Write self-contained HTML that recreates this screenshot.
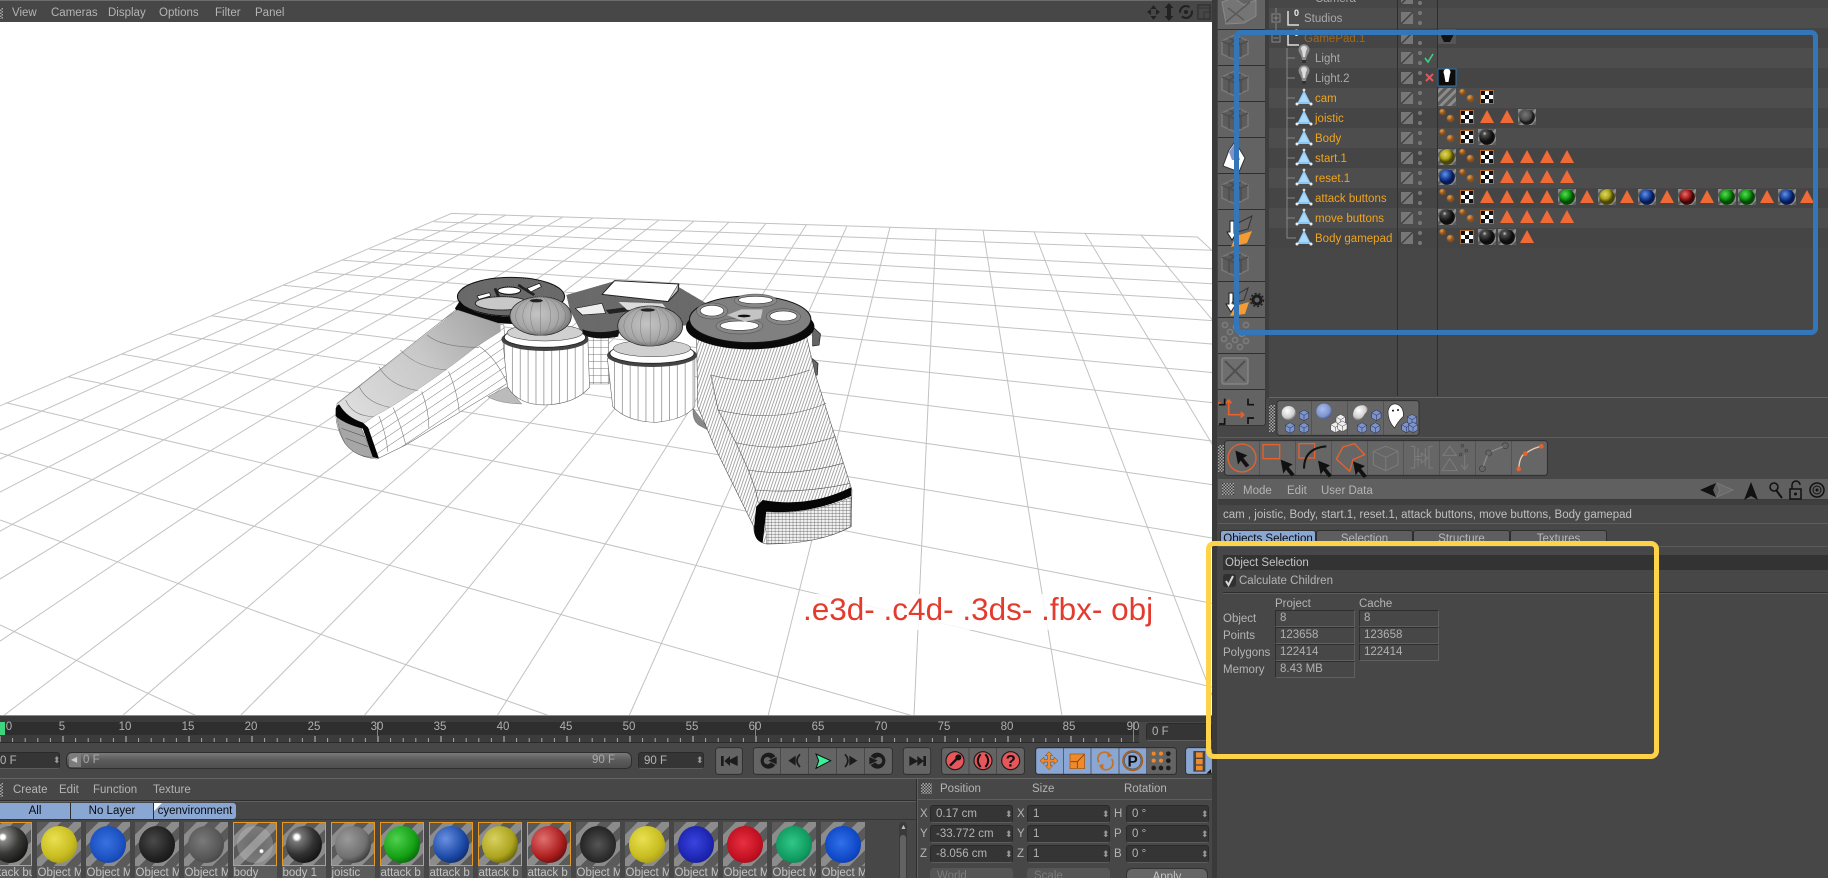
<!DOCTYPE html>
<html><head><meta charset="utf-8"><style>
html,body{margin:0;padding:0;width:1828px;height:878px;overflow:hidden;background:#474747}
body{font:11.5px/14px "Liberation Sans",sans-serif;color:#b4b4b4}
#root{position:absolute;left:0;top:0;width:1828px;height:878px;overflow:hidden;contain:paint}
.a,.t,.n{position:absolute}
.t,.n{white-space:nowrap}
.n{transform:translateX(-50%);height:14px;top:720px;color:#b0b0b0}
.o{color:#f0a41e}
.f{position:absolute;background:#353535;border:1px solid #2a2a2a;border-bottom-color:#5c5c5c;border-radius:3px;box-sizing:border-box;height:18px;padding-left:5px;line-height:16px;color:#b4b4b4}
.c{position:absolute;height:17px;width:80px;box-sizing:border-box;border:1px solid #2e2e2e;border-right-color:#606060;border-bottom-color:#606060;background:#474747;padding-left:4px;line-height:15px;color:#b0b0b0}
.tab{position:absolute;top:530px;height:16px;box-sizing:border-box;width:97px;text-align:center;line-height:16px;background:#5e5e5e;border:1px solid #2e2e2e;border-bottom:0;border-radius:3px 3px 0 0;color:#b8b8b8}
.l{position:absolute;top:803px;height:16px;box-sizing:border-box;line-height:16px;text-align:center;background:#8aa6d2;color:#0c0c0c;border-right:1px solid #2e2e2e}
.m{position:absolute;top:822px;width:44px;height:56px;overflow:hidden;background:#5c5c5c}
.m i{position:absolute;left:0;top:0;width:44px;height:44px;box-sizing:border-box;background:repeating-linear-gradient(135deg,#5a5a5a 0 9px,#8c8c8c 9px 17px)}
.m.s i{border:1px solid #e89a20}
.m b{position:absolute;left:4px;top:4px;width:36px;height:37px;border-radius:50%}
.m u{position:absolute;left:1px;top:46px;height:10px;line-height:10px;text-decoration:none;color:#c4c4c4;white-space:nowrap}
.g{position:absolute;background:repeating-conic-gradient(#a8a8a8 0 25%,#3c3c3c 0 50%) 0 0/3px 3px}
.bt{position:absolute;top:868px;height:10px;overflow:hidden;box-sizing:border-box;padding-top:6px;line-height:4px}
</style></head><body><div id="root">

<!-- viewport menu -->
<div class="a" style="left:0;top:0;width:1212px;height:22px;background:#474747;border-top:1px solid #6c6c6c;box-sizing:border-box"></div>
<div class="g" style="left:0;top:8px;width:3px;height:11px"></div>
<span class="t" style="left:12px;top:6px">View</span><span class="t" style="left:51px;top:6px">Cameras</span><span class="t" style="left:108px;top:6px">Display</span><span class="t" style="left:159px;top:6px">Options</span><span class="t" style="left:215px;top:6px">Filter</span><span class="t" style="left:255px;top:6px">Panel</span>
<svg class="a" style="left:1145px;top:2px" width="68" height="20" viewBox="0 0 68 20" fill="#222" stroke="#222">
<path d="M2,10 L6,7 V13Z M15,10 L11,7 V13Z M8.5,3 L5.5,7 H11.5Z M8.5,18 L5.5,14 H11.5Z" stroke="none"/>
<path d="M24,1 L28.5,6 H26V14 H28.5 L24,19 L19.5,14 H22V6 H19.5Z" stroke="none"/>
<circle cx="41" cy="10" r="6" fill="none" stroke-width="2" stroke-dasharray="14 4"/><circle cx="41" cy="10" r="1.5"/>
<rect x="53" y="3" width="12" height="14" fill="none" stroke="#333" stroke-width="1.5"/><path d="M53,6H65M59,17V10H65" fill="none" stroke="#333"/>
</svg>

<!-- viewport -->
<svg class="a" style="left:0;top:22px" width="1212" height="694" viewBox="0 22 1212 694">
<defs>
<linearGradient id="lg" gradientUnits="userSpaceOnUse" x1="60" y1="450" x2="480" y2="170"><stop offset="0" stop-color="#dedede"/><stop offset=".55" stop-color="#c8c8c8"/><stop offset="1" stop-color="#a4a4a4"/></linearGradient>
<radialGradient id="jg" cx=".45" cy=".45" r=".6"><stop offset="0" stop-color="#c4c4c4"/><stop offset=".7" stop-color="#a4a4a4"/><stop offset="1" stop-color="#707070"/></radialGradient>
<pattern id="h2" patternUnits="userSpaceOnUse" width="8" height="8" patternTransform="rotate(18)"><rect width="8" height="8" fill="#fff"/><path d="M4,0V8" stroke="#444" stroke-width="1.3"/></pattern>
<pattern id="h3" patternUnits="userSpaceOnUse" width="6" height="6"><rect width="6" height="6" fill="#383838"/><path d="M0,0L6,6M6,0L0,6" stroke="#bbb" stroke-width="1.1"/></pattern>
<pattern id="h4" patternUnits="userSpaceOnUse" width="10" height="9"><rect width="10" height="9" fill="#f2f2f2"/><path d="M0,4H10M5,0V9" stroke="#444" stroke-width="1"/></pattern>
<pattern id="v" patternUnits="userSpaceOnUse" width="22" height="30"><rect width="22" height="30" fill="#fff"/><path d="M11,0V30" stroke="#666" stroke-width="1.6"/></pattern>
<pattern id="s1" patternUnits="userSpaceOnUse" width="24" height="24" patternTransform="rotate(-36)"><rect width="24" height="24" fill="#fff"/><path d="M0,12H24" stroke="#777" stroke-width="1.4"/></pattern>
<pattern id="gg" patternUnits="userSpaceOnUse" width="21" height="21"><rect width="21" height="21" fill="#fff"/><path d="M0,10H21M10,0V21" stroke="#666" stroke-width="1.3"/></pattern>
</defs>
<rect x="0" y="22" width="1212" height="694" fill="#fff"/>
<g stroke="#c2c2c2" stroke-width="1" fill="none">
<path d="M451.4,213.4L-5,408M451.4,213.4L1197.5,237M433.9,221.8L1212,250.3M414.4,229.5L1212,268.7M393,238.5L1212,283.7M369.6,249.3L1212,300.5M343.2,260.3L1212,320.6M314.4,272L1212,344M284,285.4L1212,372.5M249,299.8L1212,402.6M212,315.9L1212,441M169.3,334L1212,484.6M121.4,354L1212,538M68,376.8L1212,603.4M5.8,402.6L1212,687M0,453L1212,802M0,520L1212,952M0,625L1212,1185"/>
<path d="M478,214.2L-634,716M506,215.1L-533,716M534,216L-433,716M563,216.9L-331,716M593,217.9L-225,716M626,218.9L-111,716M659,220L3,716M694,221L122,716M729,222L240,716M766,223.3L364,716M806.5,224.5L497,716M847,225.8L629,716M890,227.1L768,716M936,228.6L914,716M983,230L1062,716M1034,231.7L1220,716M1085,233.3L1376,716M1141,235L1545,716M1197.5,237L1712,716"/>
</g>
<rect x="800" y="594" width="360" height="36" fill="#fff" opacity=".85"/>

<!-- gamepad -->
<g transform="translate(320,260) scale(.357,.3333)" stroke-linejoin="round">
<path d="M470,410L525,380L565,432Q500,430 470,410Z" fill="#bbb" stroke="#555"/>
<!-- center body -->
<path d="M690,105L830,62L1000,78L1090,135L1040,195L830,212L740,235L700,150Z" fill="url(#h3)"/>
<path d="M825,62L1005,72L975,125L790,103Z" fill="#fff" stroke="#222" stroke-width="3"/>
<path d="M1005,72L1003,92L975,125" fill="#ccc" stroke="#222" stroke-width="3"/>
<path d="M715,145L790,130L800,160L735,165Z" fill="#eee" stroke="#222" stroke-width="2"/>
<path d="M800,150L870,140L890,150L810,162Z" fill="#222"/>
<path d="M835,125L960,130L980,160L860,150Z" fill="#dcdcdc" stroke="#444"/>
<!-- center post -->
<path d="M738,225L808,225L810,372L752,372Z" fill="url(#gg)" stroke="#444"/>
<path d="M735,208Q780,225 840,208L835,230Q780,242 738,226Z" fill="#111"/>
<!-- dpad disk -->
<ellipse cx="535" cy="110" rx="150" ry="58" fill="url(#h3)" stroke="#111" stroke-width="3"/>
<path d="M378,145Q400,185 540,192L560,170Q420,172 392,122Z" fill="#0a0a0a"/>
<ellipse cx="510" cy="130" rx="75" ry="20" fill="#c8c8c8" stroke="#222" stroke-width="2.5"/>
<path d="M440,108L475,98L478,108L445,118Z M580,85L615,70L620,80L590,96Z" fill="#fff" stroke="#111" stroke-width="2"/>
<ellipse cx="530" cy="92" rx="32" ry="11" fill="#fff" stroke="#111" stroke-width="3"/>
<path d="M490,85L500,110M555,75L600,105" stroke="#222" stroke-width="8" fill="none"/>
<!-- left grip -->
<path d="M48,430L380,150L515,195L525,370L240,555L160,597Q100,592 70,550Q42,500 45,455Z" fill="url(#s1)" stroke="#666" stroke-width="1.5"/>
<path d="M385,150L505,192L505,215L440,258Q340,345 200,440L150,470L120,492Q70,470 50,430Z" fill="url(#lg)" stroke="#888"/>
<g fill="none" stroke="#777" stroke-width="1.6"><path d="M300,225Q340,262 445,262M225,270Q270,322 355,330M165,320Q195,378 275,392M110,380Q130,428 195,442M72,420Q90,468 150,470"/><path d="M205,443Q225,490 240,553M285,395Q305,450 305,505M360,335Q385,395 390,455M445,258Q490,290 525,370M165,468Q185,520 190,575"/></g>
<path d="M48,470Q70,490 115,503L150,592Q100,592 70,550Q50,510 48,470Z" fill="#a6a6a6" stroke="#333"/>
<path d="M60,505L125,530M72,535L135,560" stroke="#444" stroke-width="1.5"/>
<path d="M44,445Q50,430 55,435Q75,472 120,488L135,503L165,595L148,592L120,506Q65,490 44,468Z" fill="#050505"/>
<!-- left cylinder -->
<path d="M512,240L525,380Q555,435 630,435Q715,432 755,382L750,230Z" fill="url(#v)" stroke="#555" stroke-width="1.5"/>
<ellipse cx="630" cy="238" rx="122" ry="35" fill="#444"/>
<ellipse cx="630" cy="232" rx="114" ry="30" fill="#fff" stroke="#222" stroke-width="2.5"/>
<ellipse cx="630" cy="218" rx="106" ry="25" fill="#d0d0d0" stroke="#333" stroke-width="1.5"/>
<ellipse cx="618" cy="168" rx="86" ry="58" fill="url(#jg)" stroke="#222" stroke-width="2"/>
<g fill="none" stroke="#666" stroke-width="1"><ellipse cx="618" cy="168" rx="70" ry="58"/><ellipse cx="618" cy="168" rx="50" ry="58"/><ellipse cx="618" cy="168" rx="28" ry="58"/><path d="M618,110V226"/></g>
<ellipse cx="606" cy="122" rx="18" ry="5" fill="#222"/>
<!-- right cylinder -->
<path d="M805,295L820,440Q860,485 940,487Q1020,480 1050,440L1050,285Z" fill="url(#v)" stroke="#555" stroke-width="1.5"/>
<ellipse cx="930" cy="286" rx="126" ry="35" fill="#444"/>
<ellipse cx="930" cy="280" rx="118" ry="30" fill="#fff" stroke="#222" stroke-width="2.5"/>
<ellipse cx="930" cy="265" rx="108" ry="25" fill="#d0d0d0" stroke="#333" stroke-width="1.5"/>
<ellipse cx="925" cy="198" rx="91" ry="60" fill="url(#jg)" stroke="#222" stroke-width="2"/>
<g fill="none" stroke="#666" stroke-width="1"><ellipse cx="925" cy="198" rx="74" ry="60"/><ellipse cx="925" cy="198" rx="52" ry="60"/><ellipse cx="925" cy="198" rx="28" ry="60"/><path d="M925,138V258"/></g>
<ellipse cx="918" cy="150" rx="20" ry="5" fill="#222"/>
<!-- right small -->
<path d="M1045,445L1095,515L1060,495Q1042,480 1045,445Z" fill="#888" stroke="#444"/>
<path d="M1380,200L1402,222L1398,255L1380,258Z M1378,295L1395,310L1393,345L1378,350Z" fill="#666" stroke="#222" stroke-width="2"/>
<!-- right grip -->
<path d="M1055,235Q1200,280 1362,225L1388,345L1490,690L1488,800Q1400,852 1250,852Q1215,845 1215,800L1105,560L1058,440Z" fill="url(#h2)" stroke="#444" stroke-width="1.5"/>
<g fill="none" stroke="#555" stroke-width="1.6"><path d="M1095,345Q1230,385 1372,330M1115,450Q1280,492 1418,430M1165,548Q1300,582 1445,530M1200,630Q1320,652 1465,610M1220,690Q1350,702 1485,670"/><path d="M1095,345L1115,450L1165,548L1200,630L1220,690L1228,730"/></g>
<path d="M1245,755Q1370,768 1488,712L1486,800Q1400,852 1252,852Z" fill="url(#h4)" stroke="#444"/>
<path d="M1222,740L1240,720Q1370,745 1488,682L1488,708Q1370,765 1250,755L1240,848Q1215,842 1216,800Z" fill="#060606"/>
<!-- right disk -->
<ellipse cx="1205" cy="200" rx="180" ry="68" fill="#0a0a0a"/>
<ellipse cx="1205" cy="178" rx="170" ry="70" fill="#808080" stroke="#111" stroke-width="3"/>
<ellipse cx="1220" cy="122" rx="60" ry="20" fill="#888" stroke="#333"/><ellipse cx="1220" cy="120" rx="48" ry="11" fill="#fff" stroke="#222" stroke-width="1.5"/>
<ellipse cx="1098" cy="153" rx="44" ry="24" fill="#888" stroke="#333"/><ellipse cx="1098" cy="152" rx="33" ry="16" fill="#fff" stroke="#222" stroke-width="1.5"/>
<ellipse cx="1298" cy="170" rx="48" ry="24" fill="#888" stroke="#333"/><ellipse cx="1298" cy="168" rx="38" ry="15" fill="#fff" stroke="#222" stroke-width="1.5"/>
<ellipse cx="1175" cy="198" rx="66" ry="24" fill="#888" stroke="#333"/><ellipse cx="1175" cy="197" rx="54" ry="14" fill="#fff" stroke="#222" stroke-width="1.5"/>
<path d="M1140,165L1180,148H1240L1235,175L1190,185Z" fill="#c4c4c4"/><ellipse cx="1188" cy="168" rx="18" ry="4" fill="#111"/>
</g>
</svg>
<span class="t" style="left:803px;top:591px;font-size:31.5px;line-height:36px;color:#e33b2e">.e3d- .c4d- .3ds- .fbx- obj</span>

<!-- timeline -->
<div class="a" style="left:0;top:715px;width:1212px;height:1px;background:#8a8a8a"></div>
<div class="a" style="left:0;top:716px;width:1212px;height:6px;background:#3a3a3a"></div>
<div class="a" style="left:0;top:722px;width:1139px;height:13px;background:#2e2e2e"></div>
<div class="a" style="left:0;top:735px;width:1139px;height:8px;background:#3c3c3c;border-bottom:1px solid #2a2a2a;box-sizing:border-box"></div>
<svg class="a" style="left:0;top:722px" width="1140" height="22">
<defs><pattern id="tk" patternUnits="userSpaceOnUse" x="-.5" width="12.6" height="22"><rect width="1" height="22" fill="#a8a8a8"/></pattern>
<pattern id="tk5" patternUnits="userSpaceOnUse" x="-.5" width="63" height="22"><rect width="1" height="22" fill="#c0c0c0"/></pattern></defs>
<rect x="0" y="16" width="1133" height="4" fill="url(#tk)"/><rect x="0" y="14" width="1133" height="6" fill="url(#tk5)"/>
<rect x="377" y="0" width="1" height="20" fill="#858585"/><rect x="755" y="0" width="1" height="20" fill="#858585"/><rect x="1133" y="0" width="1" height="20" fill="#858585"/>
</svg>
<div class="a" style="left:0;top:722px;width:5px;height:13px;background:#3fd47e"></div>
<span class="n" style="left:9px">0</span><span class="n" style="left:62px">5</span><span class="n" style="left:125px">10</span><span class="n" style="left:188px">15</span><span class="n" style="left:251px">20</span><span class="n" style="left:314px">25</span><span class="n" style="left:377px">30</span><span class="n" style="left:440px">35</span><span class="n" style="left:503px">40</span><span class="n" style="left:566px">45</span><span class="n" style="left:629px">50</span><span class="n" style="left:692px">55</span><span class="n" style="left:755px">60</span><span class="n" style="left:818px">65</span><span class="n" style="left:881px">70</span><span class="n" style="left:944px">75</span><span class="n" style="left:1007px">80</span><span class="n" style="left:1069px">85</span><span class="n" style="left:1133px">90</span>
<div class="f" style="left:1146px;top:723px;width:66px">0 F</div>
<div class="f" style="left:-6px;top:752px;width:66px;height:17px">0 F</div><span class="t" style="left:53px;top:753px;font-size:9px;color:#999">⬍</span>
<div class="a" style="left:66px;top:752px;width:566px;height:17px;border-radius:6px;background:linear-gradient(#7a7a7a,#5c5c5c 45%,#4e4e4e);border:1px solid #2e2e2e;box-sizing:border-box"></div>
<div class="a" style="left:69px;top:754px;width:12px;height:13px;background:#7c7c7c"></div><span class="t" style="left:71px;top:753px;font-size:8px;color:#ccc">◀</span>
<span class="t" style="left:83px;top:753px;color:#aaa">0 F</span><span class="t" style="left:592px;top:753px;color:#aaa">90 F</span>
<div class="f" style="left:638px;top:752px;width:66px;height:17px;padding-left:5px">90 F</div><span class="t" style="left:696px;top:753px;font-size:9px;color:#999">⬍</span>

<!-- transport -->
<svg class="a" style="left:710px;top:745px" width="505" height="34" viewBox="0 0 1515 102">
<g stroke="#2c2c2c" stroke-width="2.5" fill="#646464">
<rect x="17" y="8" width="80" height="80" rx="8"/><rect x="130" y="8" width="417" height="80" rx="8"/><rect x="580" y="8" width="82" height="80" rx="8"/><rect x="695" y="8" width="248" height="80" rx="8"/>
<rect x="977" y="8" width="422" height="80" rx="8" fill="#8aa6d2"/><path d="M1310,9H1391Q1399,9 1399,17V79Q1399,87 1391,87H1310Z" stroke="none"/><rect x="977" y="8" width="422" height="80" rx="8" fill="none"/>
<rect x="1427" y="8" width="80" height="80" rx="8" fill="#8aa6d2"/>
</g>
<path d="M212,9V87M296,9V87M380,9V87M464,9V87M777,9V87M860,9V87M1060,9V87M1143,9V87M1227,9V87M1310,9V87" stroke="#3a3a3a" stroke-width="2"/>
<g fill="#1c1c1c">
<path d="M33,33H41V63H33Z M43,48L60,33V44L83,32V63L60,52V63Z"/>
<path d="M196,34A24,24 0 1 0 196,60L182,52A11,11 0 1 1 182,42Z"/><path d="M175,47L200,36V58Z"/>
<path d="M235,47L257,32V62Z"/><path d="M270,28Q252,47 270,66" fill="none" stroke="#1c1c1c" stroke-width="5"/>
<path d="M405,28Q422,47 405,66" fill="none" stroke="#1c1c1c" stroke-width="5"/><path d="M418,32L442,47L418,62Z"/>
<path d="M482,34A24,24 0 1 1 482,60L496,52A11,11 0 1 0 496,42Z"/><path d="M503,47L478,36V58Z"/>
<path d="M598,33L622,47L622,33L640,47V33H648V63H640V49L622,63V50L598,63Z"/>
</g>
<path d="M318,27L362,47L318,70L326,47Z" fill="#3cf09a" stroke="#111" stroke-width="3"/>
<g fill="#e8555a" stroke="#1c1c1c" stroke-width="3.5"><circle cx="735" cy="47" r="27"/><circle cx="819" cy="47" r="27"/><circle cx="902" cy="47" r="27"/></g>
<path d="M720,62L742,40" stroke="#111" stroke-width="7"/><circle cx="745" cy="37" r="9" fill="#111"/>
<path d="M812,28Q795,47 812,66M826,28Q843,47 826,66" fill="none" stroke="#111" stroke-width="6"/>
<text x="902" y="64" font-family="Liberation Sans" font-weight="700" font-size="50" text-anchor="middle" fill="#111">?</text>
<g fill="#ef8a2a" stroke="#7a3e10" stroke-width="1.5">
<path d="M1017,20L1028,32H1021V43H1032V36L1044,47L1032,58V51H1021V62H1028L1017,74L1006,62H1013V51H1002V58L990,47L1002,36V43H1013V32H1006Z"/>
<rect x="1080" y="27" width="44" height="44"/>
</g><path d="M1082,50H1102V69M1102,50L1122,29" fill="none" stroke="#7a3e10" stroke-width="2.5"/>
<g fill="none" stroke="#c8701e" stroke-width="5"><path d="M1167,52A19,19 0 0 1 1200,30M1205,42A19,19 0 0 1 1172,66"/></g><path d="M1193,22L1207,32L1192,38Z M1180,72L1166,62L1180,56Z" fill="#c8701e"/>
<circle cx="1268" cy="47" r="29" fill="none" stroke="#a85e18" stroke-width="5"/><circle cx="1268" cy="47" r="25" fill="none" stroke="#222" stroke-width="1.5"/>
<text x="1268" y="64" font-family="Liberation Sans" font-weight="700" font-size="46" text-anchor="middle" fill="#111">P</text>
<g fill="#ef8a2a"><circle cx="1331" cy="26" r="6"/><circle cx="1353" cy="26" r="6"/><circle cx="1331" cy="47" r="6"/><circle cx="1353" cy="47" r="6"/></g>
<g fill="#1e1e1e"><circle cx="1375" cy="26" r="7"/><circle cx="1375" cy="47" r="7"/><circle cx="1331" cy="69" r="7"/><circle cx="1353" cy="69" r="7"/><circle cx="1375" cy="69" r="7"/></g>
<rect x="1450" y="18" width="36" height="62" fill="#444"/><path d="M1458,22H1478V38H1458ZM1458,42H1478V58H1458ZM1458,62H1478V76H1458Z" fill="#ef8a2a"/><path d="M1489,86L1503,86L1503,72Z" fill="#111"/>
</svg>

<!-- material manager -->
<div class="a" style="left:0;top:778px;width:1212px;height:1px;background:#656565"></div>
<div class="a" style="left:0;top:800px;width:916px;height:1px;background:#2e2e2e"></div>
<div class="a" style="left:0;top:801px;width:916px;height:1px;background:#606060"></div>
<div class="g" style="left:0;top:783px;width:3px;height:14px"></div>
<span class="t" style="left:13px;top:783px">Create</span><span class="t" style="left:59px;top:783px">Edit</span><span class="t" style="left:93px;top:783px">Function</span><span class="t" style="left:153px;top:783px">Texture</span>
<div class="l" style="left:0;width:71px">All</div><div class="l" style="left:71px;width:83px">No Layer</div><div class="l" style="left:154px;width:82px;border-radius:0 3px 3px 0;border-right:0">cyenvironment</div>
<div class="a" style="left:154px;top:803px;width:0;height:0;border-top:8px solid #fff;border-right:8px solid transparent"></div>
<div class="a" style="left:0;top:819px;width:916px;height:1px;background:#353535"></div>

<div class="m s" style="left:-12.5px"><i></i><b style="background:radial-gradient(circle at 30% 30%,#fff 0 6%,#888 12%,#3a3a38 45%,#0c0c0c 85%)"></b><u>attack bu</u></div>
<div class="m" style="left:36.5px"><i></i><b style="background:radial-gradient(circle at 38% 35%,#e8e050,#c8bd20 55%,#8f8410)"></b><u>Object M</u></div>
<div class="m" style="left:85.5px"><i></i><b style="background:radial-gradient(circle at 45% 45%,#3a72e0,#1a4fc0 60%,#0e2f80)"></b><u>Object M</u></div>
<div class="m" style="left:134.5px"><i></i><b style="background:radial-gradient(circle at 40% 40%,#4a4a4a,#222 55%,#0c0c0c)"></b><u>Object M</u></div>
<div class="m" style="left:183.5px"><i></i><b style="background:radial-gradient(circle at 40% 40%,#7a7a7a,#555 60%,#333)"></b><u>Object M</u></div>
<div class="m s" style="left:232.5px"><i></i><b style="background:radial-gradient(circle at 68% 68%,#fff 0 4%,rgba(255,255,255,0) 7%),radial-gradient(circle at 50% 50%,rgba(255,255,255,.1),rgba(220,220,220,.25) 72%,rgba(235,235,235,.85) 86%,rgba(255,255,255,.2) 97%)"></b><u>body</u></div>
<div class="m s" style="left:281.5px"><i></i><b style="background:radial-gradient(circle at 30% 30%,#fff 0 6%,#777 14%,#333 48%,#0c0c0c 85%)"></b><u>body 1</u></div>
<div class="m s" style="left:330.5px"><i></i><b style="background:radial-gradient(circle at 35% 35%,#9a9a9a,#707070 55%,#1e1e1e 90%)"></b><u>joistic</u></div>
<div class="m s" style="left:379.5px"><i></i><b style="background:radial-gradient(circle at 35% 35%,#50d050,#14a014 55%,#044804 92%)"></b><u>attack b</u></div>
<div class="m s" style="left:428.5px"><i></i><b style="background:radial-gradient(circle at 35% 35%,#6a90e0,#1c4aa8 55%,#081c50 92%)"></b><u>attack b</u></div>
<div class="m s" style="left:477.5px"><i></i><b style="background:radial-gradient(circle at 35% 35%,#d8d060,#aca41c 55%,#3e3a08 92%)"></b><u>attack b</u></div>
<div class="m s" style="left:526.5px"><i></i><b style="background:radial-gradient(circle at 35% 35%,#e07070,#ae1e1e 55%,#3c0808 92%)"></b><u>attack b</u></div>
<div class="m" style="left:575.5px"><i></i><b style="background:radial-gradient(circle at 50% 50%,#555,#2e2e2e 55%,#141414)"></b><u>Object M</u></div>
<div class="m" style="left:624.5px"><i></i><b style="background:radial-gradient(circle at 38% 35%,#e8e050,#c8bd20 55%,#8f8410)"></b><u>Object M</u></div>
<div class="m" style="left:673.5px"><i></i><b style="background:radial-gradient(circle at 45% 45%,#3a44e0,#1c25b0 60%,#0e1470)"></b><u>Object M</u></div>
<div class="m" style="left:722.5px"><i></i><b style="background:radial-gradient(circle at 45% 45%,#e83040,#c01020 60%,#800810)"></b><u>Object M</u></div>
<div class="m" style="left:771.5px"><i></i><b style="background:radial-gradient(circle at 45% 45%,#30c888,#109a60 60%,#066040)"></b><u>Object M</u></div>
<div class="m" style="left:820.5px"><i></i><b style="background:radial-gradient(circle at 45% 45%,#3070e8,#1048c8 60%,#082c88)"></b><u>Object M</u></div>
<div class="a" style="left:899px;top:822px;width:8px;height:56px;background:#3a3a3a;border-radius:4px 4px 0 0"></div>
<div class="a" style="left:900px;top:835px;width:6px;height:43px;background:#626262;border-radius:3px 3px 0 0"></div>
<span class="t" style="left:900px;top:821px;font-size:7px;color:#bbb">▲</span>

<!-- coordinates -->
<div class="a" style="left:916px;top:779px;width:1px;height:99px;background:#2e2e2e"></div><div class="a" style="left:917px;top:779px;width:1px;height:99px;background:#5e5e5e"></div>
<div class="g" style="left:921px;top:783px;width:11px;height:11px"></div>
<span class="t" style="left:940px;top:782px">Position</span><span class="t" style="left:1032px;top:782px">Size</span><span class="t" style="left:1124px;top:782px">Rotation</span>
<div class="a" style="left:918px;top:799px;width:294px;height:1px;background:#5e5e5e"></div>
<span class="t" style="left:920px;top:807px">X</span><span class="t" style="left:920px;top:827px">Y</span><span class="t" style="left:920px;top:847px">Z</span>
<span class="t" style="left:1017px;top:807px">X</span><span class="t" style="left:1017px;top:827px">Y</span><span class="t" style="left:1017px;top:847px">Z</span>
<span class="t" style="left:1114px;top:807px">H</span><span class="t" style="left:1114px;top:827px">P</span><span class="t" style="left:1114px;top:847px">B</span>
<div class="f" style="left:930px;top:805px;width:83px">0.17 cm</div><div class="f" style="left:930px;top:825px;width:83px">-33.772 cm</div><div class="f" style="left:930px;top:845px;width:83px">-8.056 cm</div>
<div class="f" style="left:1027px;top:805px;width:83px">1</div><div class="f" style="left:1027px;top:825px;width:83px">1</div><div class="f" style="left:1027px;top:845px;width:83px">1</div>
<div class="f" style="left:1126px;top:805px;width:83px">0 °</div><div class="f" style="left:1126px;top:825px;width:83px">0 °</div><div class="f" style="left:1126px;top:845px;width:83px">0 °</div>
<span class="t" style="left:1005px;top:807px;font-size:9px;color:#999">⬍</span><span class="t" style="left:1005px;top:827px;font-size:9px;color:#999">⬍</span><span class="t" style="left:1005px;top:847px;font-size:9px;color:#999">⬍</span>
<span class="t" style="left:1102px;top:807px;font-size:9px;color:#999">⬍</span><span class="t" style="left:1102px;top:827px;font-size:9px;color:#999">⬍</span><span class="t" style="left:1102px;top:847px;font-size:9px;color:#999">⬍</span>
<span class="t" style="left:1201px;top:807px;font-size:9px;color:#999">⬍</span><span class="t" style="left:1201px;top:827px;font-size:9px;color:#999">⬍</span><span class="t" style="left:1201px;top:847px;font-size:9px;color:#999">⬍</span>
<div class="bt" style="left:930px;width:83px;border-radius:4px 4px 0 0;background:#565656;color:#7c7c7c;padding-left:7px">World</div>
<div class="bt" style="left:1027px;width:83px;border-radius:4px 4px 0 0;background:#565656;color:#7c7c7c;padding-left:7px">Scale</div>
<div class="bt" style="left:1126px;width:82px;border-radius:6px 6px 0 0;background:#666;border:1px solid #333;border-bottom:0;text-align:center;color:#c4c4c4">Apply</div>

<!-- right side -->
<div class="a" style="left:1212px;top:0;width:5px;height:878px;background:#3a3a3a"></div>
<div class="a" style="left:1265px;top:0;width:4px;height:398px;background:#3e3e3e"></div>
<!-- palette -->
<div class="a" style="left:1218px;top:0;width:47px;height:425px;background:repeating-linear-gradient(#2f2f2f 0 1px,#636363 1px 36px) 0 -7px;border-radius:0 0 4px 4px"></div>
<svg class="a" style="left:1218px;top:0" width="48" height="426" fill="none">
<defs><g id="cube" stroke="#797979" stroke-width="1.5" fill="#5c5c5c"><path d="M0,-12L13,-6V7L0,13L-13,7V-6Z"/><path d="M-13,-6L0,0L13,-6M0,0V13M-6,-9L6,-3V10M6,-9L-6,-3V10" fill="none" stroke="#4c4c4c"/></g></defs>
<path d="M4,2L16,-2L26,5L38,0V16L26,23L8,24Z" stroke="#8a8a8a" fill="#757575"/><path d="M8,22L32,2M10,8L26,20" stroke="#5a5a5a" stroke-width="1.5"/>
<use href="#cube" x="17" y="47"/><use href="#cube" x="17" y="83"/><use href="#cube" x="17" y="119"/>
<use href="#cube" x="17" y="191"/><use href="#cube" x="17" y="263"/>
<path d="M11,150L16,143L19,145L27,158L21,172L5,166Z" fill="#fff" stroke="#333"/><path d="M11,152L17,143L22,160L14,160Z" fill="#7d93cc"/>
<path d="M12,221V232H9L14,240L19,232H16V221Z" fill="#fff" stroke="#222"/>
<path d="M20,223L34,216L30,229L16,233Z" fill="#666" stroke="#333"/><path d="M18,236L34,231L29,243L13,247Z" fill="#f39c34"/>
<path d="M11,293V304H8L13,312L18,304H15V293Z" fill="#fff" stroke="#222"/>
<path d="M18,295L30,288L26,300L14,303Z" fill="#666" stroke="#333"/><path d="M17,306L31,302L27,314L12,316Z" fill="#f39c34"/>
<circle cx="39" cy="300" r="4" stroke="#1c1c1c" stroke-width="3"/><circle cx="39" cy="300" r="6.5" stroke="#1c1c1c" stroke-width="1.5" stroke-dasharray="2 2"/>
<g stroke="#7c7c7c" stroke-width="1.6"><circle cx="7" cy="325" r="2.6"/><circle cx="18" cy="327" r="2.6"/><circle cx="28" cy="325" r="2.6"/><circle cx="12" cy="332" r="2.6"/><circle cx="24" cy="334" r="2.6"/><circle cx="6" cy="339" r="2.6"/><circle cx="17" cy="340" r="2.6"/><circle cx="28" cy="341" r="2.6"/><circle cx="11" cy="346" r="2.6"/><circle cx="22" cy="347" r="2.6"/></g>
<rect x="4" y="358" width="26" height="26" rx="2" fill="#6e6e6e" stroke="#838383" stroke-width="1.5"/><path d="M7,361L27,381M27,361L7,381" stroke="#505050" stroke-width="2"/>
</svg>
<svg class="a" style="left:1218px;top:398px" width="335" height="82" viewBox="0 0 1005 246">
<defs>
<g id="cb" fill="#7d93cc" stroke="#1f2a44" stroke-width="1.5"><path d="M0,-16L14,-8V8L0,16L-14,8V-8Z"/><path d="M-14,-8L0,0L14,-8M0,0V16" fill="none"/></g>
<g id="cw" fill="#eee" stroke="#444" stroke-width="1.5"><path d="M0,-16L14,-8V8L0,16L-14,8V-8Z"/><path d="M-14,-8L0,0L14,-8M0,0V16" fill="none"/></g>
<path id="cur" d="M0,0L36,14L24,22L42,44L32,50L16,30L8,42Z" fill="#111"/>
<radialGradient id="wh" cx=".4" cy=".35" r=".7"><stop offset="0" stop-color="#fff"/><stop offset=".7" stop-color="#ccc"/><stop offset="1" stop-color="#666"/></radialGradient>
<radialGradient id="bl" cx=".4" cy=".35" r=".7"><stop offset="0" stop-color="#a8bcee"/><stop offset=".7" stop-color="#7d93cc"/><stop offset="1" stop-color="#3e4f80"/></radialGradient>
</defs>
<path d="M-1,-10H142V74Q142,82 134,82H-1Z" fill="#636363" stroke="#2c2c2c" stroke-width="2"/>
<path d="M8,15H-1M32,5V50H78M32,5L24,16M32,5L40,16M78,50L68,42M78,50L68,58" fill="none" stroke="#e8612c" stroke-width="5"/>
<path d="M3,20H20V2M90,2V20H108M3,78H20V60M108,60H90V78" fill="none" stroke="#111" stroke-width="5"/>
<g fill="#666" stroke="#2c2c2c" stroke-width="2.5"><rect x="177" y="8" width="426" height="104" rx="8"/><rect x="20" y="128" width="968" height="104" rx="8"/></g>
<path d="M281,9V111M388,9V111M497,9V111M125,129V231M233,129V231M341,129V231M449,129V231M557,129V231M665,129V231M773,129V231M881,129V231" stroke="#4a4a4a" stroke-width="2"/>
<circle cx="212" cy="45" r="21" fill="url(#wh)"/><use href="#cb" x="258" y="52"/><use href="#cb" x="216" y="90"/><use href="#cb" x="258" y="90"/>
<circle cx="318" cy="40" r="23" fill="url(#bl)"/><use href="#cw" x="368" y="65"/><use href="#cw" x="352" y="88"/><use href="#cw" x="373" y="85"/>
<path d="M405,50Q408,20 438,22Q458,30 440,48Q430,68 415,66Q405,62 405,50Z" fill="url(#wh)"/><use href="#cb" x="475" y="52"/><use href="#cb" x="432" y="90"/><use href="#cb" x="472" y="90"/>
<path d="M510,40Q515,15 535,18Q558,25 556,55Q540,70 530,90Q510,70 510,40Z" fill="#fff" stroke="#222" stroke-width="2"/><circle cx="525" cy="38" r="3" fill="#111"/><circle cx="540" cy="36" r="3" fill="#111"/><use href="#cb" x="582" y="65"/><use href="#cb" x="565" y="88"/><use href="#cb" x="585" y="88"/>
<g fill="none" stroke="#e8612c" stroke-width="4"><circle cx="72" cy="180" r="42"/><rect x="135" y="140" width="50" height="42"/><rect x="243" y="137" width="47" height="43"/><path d="M355,183L375,147L410,137L440,170L405,185L395,220Z"/></g>
<use href="#cur" x="52" y="158"/><use href="#cur" x="188" y="185"/>
<path d="M258,212Q258,150 325,145" fill="none" stroke="#111" stroke-width="6"/><use href="#cur" x="300" y="188"/><use href="#cur" x="405" y="190"/>
<g fill="none" stroke="#7c7c7c" stroke-width="3"><path d="M503,145L540,160V200L503,218L466,200V160Z M466,160L503,178L540,160M503,178V218"/><path d="M578,145H590V210H578M645,145H633V210H645M600,150V205M622,150V205M590,175H610V165L630,180L610,195V185H590"/><path d="M695,145L715,172H675Z M695,182L718,218H672Z M740,170V210M730,200L740,215L750,200"/></g>
<g fill="none" stroke="#444" stroke-width="2.5"><circle cx="733" cy="143" r="4"/><circle cx="745" cy="158" r="4"/><circle cx="728" cy="170" r="4"/><circle cx="793" cy="212" r="9"/><circle cx="812" cy="165" r="9"/><circle cx="862" cy="143" r="9"/></g>
<path d="M796,204L808,172M820,160L855,146" stroke="#8a8a8a" stroke-width="4" fill="none"/>
<path d="M902,213Q905,170 925,165Q945,150 970,145" fill="none" stroke="#f0c8b4" stroke-width="4"/><g fill="#e8612c"><circle cx="902" cy="213" r="7"/><circle cx="922" cy="167" r="7"/><circle cx="970" cy="145" r="7"/></g>
</svg>
<div class="g" style="left:1269px;top:405px;width:6px;height:27px"></div>
<div class="g" style="left:1218px;top:445px;width:6px;height:27px"></div>

<!-- object manager -->
<div class="a" style="left:1269px;top:0;width:559px;height:397px;background:#474747"></div>
<div class="a" style="left:1269px;top:8px;width:559px;height:20px;background:#4d4d4d"></div>
<div class="a" style="left:1269px;top:28px;width:559px;height:20px;background:#454545"></div>
<div class="a" style="left:1269px;top:48px;width:559px;height:20px;background:#4d4d4d"></div>
<div class="a" style="left:1269px;top:68px;width:559px;height:20px;background:#454545"></div>
<div class="a" style="left:1269px;top:88px;width:559px;height:20px;background:#4d4d4d"></div>
<div class="a" style="left:1269px;top:108px;width:559px;height:20px;background:#454545"></div>
<div class="a" style="left:1269px;top:128px;width:559px;height:20px;background:#4d4d4d"></div>
<div class="a" style="left:1269px;top:148px;width:559px;height:20px;background:#454545"></div>
<div class="a" style="left:1269px;top:168px;width:559px;height:20px;background:#4d4d4d"></div>
<div class="a" style="left:1269px;top:188px;width:559px;height:20px;background:#454545"></div>
<div class="a" style="left:1269px;top:208px;width:559px;height:20px;background:#4d4d4d"></div>
<div class="a" style="left:1269px;top:228px;width:559px;height:20px;background:#454545"></div>
<div class="a" style="left:1397px;top:0;width:1px;height:396px;background:#2e2e2e"></div>
<div class="a" style="left:1437px;top:0;width:1px;height:396px;background:#2e2e2e"></div>
<div class="a" style="left:1269px;top:397px;width:559px;height:1px;background:#666"></div>
<div class="a" style="left:1218px;top:437px;width:610px;height:1px;background:#5e5e5e"></div>

<svg class="a" style="left:1269px;top:0;" width="559" height="260" viewBox="1269 0 559 260">
<defs>
<g id="tri"><path d="M0,-7L7,6H-7Z" fill="#f06a35"/></g>
<radialGradient id="dg" cx=".35" cy=".3"><stop offset="0" stop-color="#e8a050"/><stop offset="1" stop-color="#8a4e18"/></radialGradient>
<g id="dots"><circle cx="-4.5" cy="-5" r="3.2" fill="url(#dg)"/><circle cx="3.5" cy="1.5" r="3.8" fill="url(#dg)"/></g>
<g id="chk"><rect x="-6.5" y="-6.5" width="13" height="13" fill="#fff" stroke="#b0682a"/><path d="M-6,-6h4v4h-4zM2,-6h4v4h-4zM-2,-2h4v4h-4zM-6,2h4v4h-4zM2,2h4v4h-4z" fill="#111"/></g>
<pattern id="tg" patternUnits="userSpaceOnUse" width="6" height="6" patternTransform="rotate(45)"><rect width="6" height="6" fill="#5c5c5c"/><rect width="3" height="6" fill="#8c8c8c"/></pattern>
<radialGradient id="gy" cx=".38" cy=".32"><stop offset="0" stop-color="#dcd868"/><stop offset=".6" stop-color="#b0a818"/><stop offset="1" stop-color="#4a4608"/></radialGradient>
<radialGradient id="gb" cx=".38" cy=".32"><stop offset="0" stop-color="#6890e0"/><stop offset=".6" stop-color="#1c48a8"/><stop offset="1" stop-color="#081a50"/></radialGradient>
<radialGradient id="gg2" cx=".38" cy=".32"><stop offset="0" stop-color="#58d858"/><stop offset=".6" stop-color="#14a014"/><stop offset="1" stop-color="#044804"/></radialGradient>
<radialGradient id="gr" cx=".38" cy=".32"><stop offset="0" stop-color="#e07070"/><stop offset=".6" stop-color="#ae1e1e"/><stop offset="1" stop-color="#3c0808"/></radialGradient>
<radialGradient id="gd" cx=".35" cy=".28"><stop offset="0" stop-color="#cfcfcf"/><stop offset=".25" stop-color="#4e4e4e"/><stop offset="1" stop-color="#0e0e0e"/></radialGradient>
<radialGradient id="gm" cx=".4" cy=".35"><stop offset="0" stop-color="#777"/><stop offset=".7" stop-color="#4e4e4e"/><stop offset="1" stop-color="#1a1a1a"/></radialGradient>
<g id="bg"><rect x="-9" y="-8" width="18" height="16" fill="url(#tg)"/></g>
<g id="sy"><use href="#bg"/><circle r="7.8" fill="url(#gy)"/></g>
<g id="sb"><use href="#bg"/><circle r="7.8" fill="url(#gb)"/></g>
<g id="sg"><use href="#bg"/><circle r="7.8" fill="url(#gg2)"/></g>
<g id="sr"><use href="#bg"/><circle r="7.8" fill="url(#gr)"/></g>
<g id="sd"><use href="#bg"/><circle r="7.8" fill="url(#gd)"/></g>
<g id="sm"><use href="#bg"/><circle r="7.8" fill="url(#gm)"/></g>
<g id="ck"><rect x="-6" y="-6" width="12" height="12" fill="#777"/><path d="M-6,6L6,-6" stroke="#404040" stroke-width="1.5"/><circle cx="13" cy="-5" r="2" fill="#777"/><circle cx="13" cy="5" r="2" fill="#777"/></g>
<g id="pt"><path d="M0,-8L7,6H-7Z" fill="#8cc6f2"/><path d="M0,-5L5,4H-5Z" fill="#a8d8fa"/><circle cx="0" cy="-8" r="1.4" fill="#ddd"/><circle cx="-7" cy="6" r="1.5" fill="#eee"/><circle cx="7" cy="6" r="1.5" fill="#eee"/></g>
<g id="bulb"><path d="M-5,-4A5.5,5.5 0 1 1 5,-4Q2,1 2,4H-2Q-2,1 -5,-4Z" fill="#8e8e8e"/><path d="M-2,-5A3,3 0 1 1 2,-5L1,1H-1Z" fill="#ddd"/><rect x="-2" y="4" width="4" height="3" fill="#333"/></g>
<g id="null"><path d="M0,-8V6H11" fill="none" stroke="#ddd" stroke-width="1.5"/></g>
</defs>
<g fill="none" stroke="#888"><path d="M1287,48V238H1296M1287,58H1295M1287,78H1295M1287,98H1295M1287,118H1295M1287,138H1295M1287,158H1295M1287,178H1295M1287,198H1295M1287,218H1295"/><path d="M1276,8V13M1276,23V33"/><rect x="1272" y="14" width="8" height="8"/><path d="M1273.5,18H1278.5M1276,15.5V20.5"/><rect x="1272" y="34" width="8" height="8"/><path d="M1273.5,38H1278.5"/></g>
<use href="#null" x="1288" y="19"/><use href="#null" x="1288" y="39"/>
<use href="#bulb" x="1304" y="56"/><use href="#bulb" x="1304" y="77"/>
<use href="#pt" x="1304" y="98"/><use href="#pt" x="1304" y="118"/><use href="#pt" x="1304" y="138"/><use href="#pt" x="1304" y="158"/><use href="#pt" x="1304" y="178"/><use href="#pt" x="1304" y="198"/><use href="#pt" x="1304" y="218"/><use href="#pt" x="1304" y="238"/>
<use href="#ck" x="1407" y="-2"/><use href="#ck" x="1407" y="18"/><use href="#ck" x="1407" y="38"/><use href="#ck" x="1407" y="58"/><use href="#ck" x="1407" y="78"/><use href="#ck" x="1407" y="98"/><use href="#ck" x="1407" y="118"/><use href="#ck" x="1407" y="138"/><use href="#ck" x="1407" y="158"/><use href="#ck" x="1407" y="178"/><use href="#ck" x="1407" y="198"/><use href="#ck" x="1407" y="218"/><use href="#ck" x="1407" y="238"/>
<path d="M1425,58L1428,62L1433,54" fill="none" stroke="#3fd48a" stroke-width="1.5"/><path d="M1426,74L1433,81M1433,74L1426,81" stroke="#e8555a" stroke-width="2"/>
<!-- tags -->
<rect x="1438" y="29" width="18" height="15" fill="#555"/><path d="M1441,36L1448,30L1454,34L1450,42L1444,42Z" fill="#111"/>
<rect x="1438" y="69" width="18" height="17" fill="#0c0c0c" stroke="#2a7ab8"/><path d="M1444,74A3.5,3.5 0 1 1 1450,74L1448.5,82H1445.5Z" fill="#fff"/>
<rect x="1438" y="88" width="18" height="18" fill="url(#tg)"/>
<use href="#dots" x="1467" y="97"/><use href="#chk" x="1487" y="97"/>
<use href="#dots" x="1447" y="117"/><use href="#chk" x="1467" y="117"/><use href="#tri" x="1487" y="117"/><use href="#tri" x="1507" y="117"/><use href="#sm" x="1527" y="117"/>
<use href="#dots" x="1447" y="137"/><use href="#chk" x="1467" y="137"/><use href="#sd" x="1487" y="137"/>
<use href="#sy" x="1447" y="157"/><use href="#dots" x="1467" y="157"/><use href="#chk" x="1487" y="157"/><use href="#tri" x="1507" y="157"/><use href="#tri" x="1527" y="157"/><use href="#tri" x="1547" y="157"/><use href="#tri" x="1567" y="157"/>
<use href="#sb" x="1447" y="177"/><use href="#dots" x="1467" y="177"/><use href="#chk" x="1487" y="177"/><use href="#tri" x="1507" y="177"/><use href="#tri" x="1527" y="177"/><use href="#tri" x="1547" y="177"/><use href="#tri" x="1567" y="177"/>
<use href="#dots" x="1447" y="197"/><use href="#chk" x="1467" y="197"/><use href="#tri" x="1487" y="197"/><use href="#tri" x="1507" y="197"/><use href="#tri" x="1527" y="197"/><use href="#tri" x="1547" y="197"/><use href="#sg" x="1567" y="197"/><use href="#tri" x="1587" y="197"/><use href="#sy" x="1607" y="197"/><use href="#tri" x="1627" y="197"/><use href="#sb" x="1647" y="197"/><use href="#tri" x="1667" y="197"/><use href="#sr" x="1687" y="197"/><use href="#tri" x="1707" y="197"/><use href="#sg" x="1727" y="197"/><use href="#sg" x="1747" y="197"/><use href="#tri" x="1767" y="197"/><use href="#sb" x="1787" y="197"/><use href="#tri" x="1807" y="197"/>
<use href="#sd" x="1447" y="217"/><use href="#dots" x="1467" y="217"/><use href="#chk" x="1487" y="217"/><use href="#tri" x="1507" y="217"/><use href="#tri" x="1527" y="217"/><use href="#tri" x="1547" y="217"/><use href="#tri" x="1567" y="217"/>
<use href="#dots" x="1447" y="237"/><use href="#chk" x="1467" y="237"/><use href="#sd" x="1487" y="237"/><use href="#sd" x="1507" y="237"/><use href="#tri" x="1527" y="237"/>
</svg>
<span class="t" style="left:1294px;top:6px;font-size:9px;font-weight:700;color:#eee">0</span><span class="t" style="left:1294px;top:26px;font-size:9px;font-weight:700;color:#eee">0</span>
<span class="t" style="left:1315px;top:-8px;color:#aaa">Camera</span>
<span class="t" style="left:1304px;top:12px;color:#aaa">Studios</span>
<span class="t" style="left:1304px;top:32px;color:#a0681a">GamePad.1</span>
<span class="t" style="left:1315px;top:52px;color:#aaa">Light</span>
<span class="t" style="left:1315px;top:72px;color:#aaa">Light.2</span>
<span class="t o" style="left:1315px;top:92px">cam</span>
<span class="t o" style="left:1315px;top:112px">joistic</span>
<span class="t o" style="left:1315px;top:132px">Body</span>
<span class="t o" style="left:1315px;top:152px">start.1</span>
<span class="t o" style="left:1315px;top:172px">reset.1</span>
<span class="t o" style="left:1315px;top:192px">attack buttons</span>
<span class="t o" style="left:1315px;top:212px">move buttons</span>
<span class="t o" style="left:1315px;top:232px">Body gamepad</span>

<!-- attributes -->
<div class="a" style="left:1218px;top:479px;width:610px;height:21px;background:#606060;border-bottom:1px solid #3a3a3a;box-sizing:border-box"></div>
<div class="g" style="left:1222px;top:483px;width:12px;height:12px"></div>
<span class="t" style="left:1243px;top:484px">Mode</span><span class="t" style="left:1287px;top:484px">Edit</span><span class="t" style="left:1321px;top:484px">User Data</span>
<svg class="a" style="left:1695px;top:480px" width="133" height="20" fill="#111">
<path d="M5,10L21,3L18,10L21,17Z"/><path d="M38,10L22,3L25,10L22,17Z" fill="#6a6a6a" stroke="#777"/>
<path d="M56,2L63,20L56,16L49,20Z"/>
<circle cx="79" cy="7" r="4" fill="none" stroke="#111" stroke-width="1.5"/><path d="M81,10L87,18" stroke="#111" stroke-width="2"/>
<path d="M97,9V5A4,4 0 0 1 105,5" fill="none" stroke="#111" stroke-width="1.5"/><rect x="95" y="9" width="11" height="10" fill="none" stroke="#111" stroke-width="1.5"/><circle cx="100.5" cy="14" r="1.5"/>
<circle cx="122" cy="10" r="7" fill="none" stroke="#111" stroke-width="1.5"/><circle cx="122" cy="10" r="4" fill="none" stroke="#111"/><circle cx="122" cy="10" r="1.5"/>
</svg>
<div class="a" style="left:1218px;top:500px;width:610px;height:5px;background:#3e3e3e"></div>
<div class="a" style="left:1218px;top:505px;width:610px;height:19px;background:#484848;border-bottom:1px solid #5e5e5e;box-sizing:border-box"></div>
<span class="t" style="left:1223px;top:508px;color:#c0c0c0">cam , joistic, Body, start.1, reset.1, attack buttons, move buttons, Body gamepad</span>
<div class="tab" style="left:1220px;background:#8aa6d2;color:#0c0c0c;width:96px">Objects Selection</div>
<div class="tab" style="left:1316px">Selection</div><div class="tab" style="left:1413px">Structure</div><div class="tab" style="left:1510px;width:97px">Textures</div>
<div class="a" style="left:1218px;top:546px;width:610px;height:1px;background:#5a5a5a"></div>
<div class="a" style="left:1223px;top:555px;width:605px;height:15px;background:#333"></div>
<span class="t" style="left:1225px;top:556px;color:#c4c4c4">Object Selection</span>
<div class="a" style="left:1223px;top:574px;width:13px;height:13px;background:#303030;border-radius:3px"></div>
<svg class="a" style="left:1223px;top:574px" width="13" height="13"><path d="M3,7L5.5,11L10,2" fill="none" stroke="#d8d8d8" stroke-width="2"/></svg>
<span class="t" style="left:1239px;top:574px">Calculate Children</span>
<div class="a" style="left:1223px;top:592px;width:605px;height:1px;background:#2e2e2e"></div>
<div class="a" style="left:1223px;top:593px;width:605px;height:1px;background:#5c5c5c"></div>
<span class="t" style="left:1275px;top:597px">Project</span><span class="t" style="left:1359px;top:597px">Cache</span>
<span class="t" style="left:1223px;top:612px">Object</span><span class="t" style="left:1223px;top:629px">Points</span><span class="t" style="left:1223px;top:646px">Polygons</span><span class="t" style="left:1223px;top:663px">Memory</span>
<div class="c" style="left:1275px;top:610px">8</div><div class="c" style="left:1359px;top:610px">8</div>
<div class="c" style="left:1275px;top:627px">123658</div><div class="c" style="left:1359px;top:627px">123658</div>
<div class="c" style="left:1275px;top:644px">122414</div><div class="c" style="left:1359px;top:644px">122414</div>
<div class="c" style="left:1275px;top:661px">8.43 MB</div>

<!-- annotations -->
<div class="a" style="left:1233.5px;top:29.5px;width:584px;height:305px;border:5px solid #3476ba;border-radius:7px;box-sizing:border-box"></div>
<div class="a" style="left:1205.5px;top:540.5px;width:453px;height:218px;border:5px solid #fdd448;border-radius:8px;box-sizing:border-box"></div>
</div></body></html>
